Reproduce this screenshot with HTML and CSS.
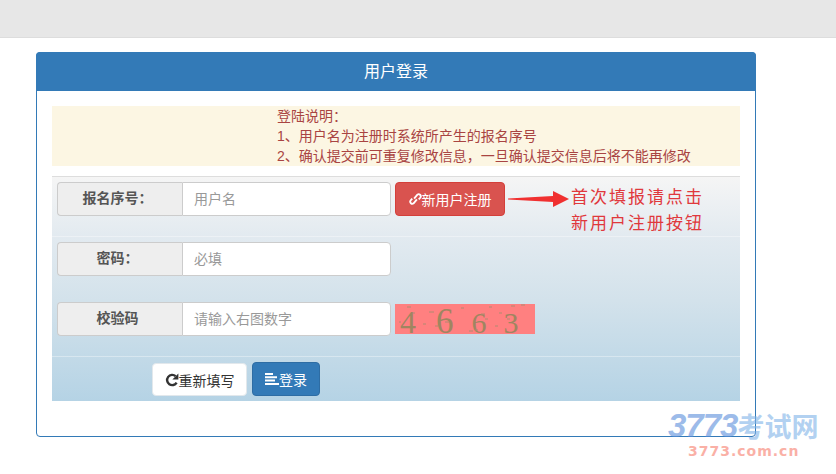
FILE: index.html
```html
<!DOCTYPE html>
<html lang="zh-CN">
<head>
    <meta charset="UTF-8">
    <meta name="viewport" content="width=device-width, initial-scale=1.0">
    <title>用户登录</title>
    <link rel="stylesheet" href="styles.css">
</head>
<body>
    <div class="navbar"></div>
    <div class="panel">
        <div class="panel-heading">用户登录</div>
        <div class="panel-body">
            <div class="notice">
                <div>登陆说明：</div>
                <div>1、用户名为注册时系统所产生的报名序号</div>
                <div>2、确认提交前可重复修改信息，一旦确认提交信息后将不能再修改</div>
            </div>
            <form class="login-form">
                <div class="form-row">
                    <div class="input-group">
                        <span class="addon">报名序号：</span>
                        <input type="text" class="form-input" placeholder="用户名">
                    </div>
                    <button type="button" class="btn btn-danger">
                        <svg class="icon" viewBox="0 0 14 14" width="13" height="14">
                            <path d="M5.5 6.5 9 2.3A2.3 2.3 0 0 1 12.3 5.4L10.5 7.5M8.5 7.5 5 11.7A2.3 2.3 0 0 1 1.7 8.6L3.5 6.5" fill="none" stroke="#fff" stroke-width="2"/>
                        </svg>新用户注册
                    </button>
                    <svg class="arrow" viewBox="0 0 62 18" width="62" height="18">
                        <polygon points="0,7.5 45,5 45,0 61,8 45,16 45,11 0,8.5" fill="#f03030"/>
                    </svg>
                    <div class="hint">首次填报请点击<br>新用户注册按钮</div>
                </div>
                <div class="form-row no-line">
                    <div class="input-group">
                        <span class="addon">密码：</span>
                        <input type="password" class="form-input" placeholder="必填">
                    </div>
                </div>
                <div class="form-row">
                    <div class="input-group">
                        <span class="addon">校验码</span>
                        <input type="text" class="form-input" placeholder="请输入右图数字">
                    </div>
                    <div class="captcha">
                        <span class="digit-a">4</span>
                        <span class="digit-b">6</span>
                        <span class="digit-c">6</span>
                        <span class="digit-d">3</span>
                        <svg class="specks" viewBox="0 0 140 30" width="140" height="30">
                            <path d="M12 3h4M4 18h2M34 8h5M40 22h3M50 18h4M66 4h3M74 27h4M86 10h4M90 15h3M94 3h3M100 22h3M104 9h3M112 15h3M116 2h4M126 1h4M80 26h3M28 20h3M18 9h2" fill="none" stroke="#b08a70" stroke-width="1"/>
                        </svg>
                    </div>
                </div>
                <div class="form-actions">
                    <button type="reset" class="btn btn-default">
                        <svg class="icon" viewBox="0 0 14 14" width="14" height="14">
                            <path d="M11.6 9.6A5.1 5.1 0 1 1 10.6 3.2" fill="none" stroke="#333" stroke-width="2.4"/>
                            <polygon points="13.4,0.6 13.4,6.6 7.4,6.6" fill="#333"/>
                        </svg>重新填写
                    </button>
                    <button type="button" class="btn btn-primary">
                        <svg class="icon" viewBox="0 0 14 12" width="14" height="12">
                            <path d="M0 0h8v2H0zM0 3.3h12v2H0zM0 6.6h10v2H0zM0 9.9h14v2H0z" fill="#fff"/>
                        </svg>登录
                    </button>
                </div>
            </form>
        </div>
    </div>
    <div class="watermark">
        <div class="wm-top"><i>3773</i><span>考试网</span></div>
        <div class="wm-bottom">3773.com.cn</div>
    </div>
</body>
</html>
```
FILE: styles.css
```css
* {
    box-sizing: border-box;
}
body {
    font-family: "Liberation Sans", "Noto Sans CJK SC", sans-serif;
    font-size: 14px;
    color: #333;
    background-color: #fff;
    margin: 0;
    height: 474px;
    overflow: hidden;
    position: relative;
}
.navbar {
    height: 38px;
    background-color: #e7e7e7;
    border-bottom: 1px solid #ddd;
}
.panel {
    width: 720px;
    height: 385px;
    margin: 14px 0 0 36px;
    border: 1px solid #337ab7;
    border-radius: 4px;
}
.panel-heading {
    height: 39px;
    margin: -1px -1px 0;
    background-color: #337ab7;
    border-radius: 4px 4px 0 0;
    color: #fff;
    font-size: 16px;
    line-height: 39px;
    text-align: center;
}
.panel-body {
    padding: 15px;
}
.notice {
    height: 60px;
    padding-left: 225px;
    background-color: #fcf6e3;
    color: #a94442;
    line-height: 20px;
}
.login-form {
    margin-top: 10px;
    height: 225px;
    background: linear-gradient(to bottom, #f5f5f5 0%, #e2eaf0 27%, #d3e2eb 55%, #b5d3e5 100%);
    border-top: 1px solid #ddd;
}
.form-row {
    display: flex;
    align-items: flex-start;
    gap: 5px;
    height: 60px;
    padding: 5px 0 0 5px;
    border-bottom: 1px solid rgba(255, 255, 255, 0.35);
}
.form-row.no-line {
    border-bottom: 0;
}
.input-group {
    display: flex;
    width: 334px;
    height: 34px;
    margin-right: -1px;
}
.addon {
    width: 125px;
    padding-right: 5px;
    background-color: #eee;
    border: 1px solid #ccc;
    border-right: 0;
    border-radius: 4px 0 0 4px;
    color: #555;
    font-weight: bold;
    line-height: 30px;
    text-align: center;
}
.form-input {
    flex: 1;
    min-width: 0;
    padding: 0 11px;
    background-color: #fff;
    border: 1px solid #ccc;
    border-radius: 0 4px 4px 0;
    outline: none;
    font-family: inherit;
    font-size: 14px;
    color: #555;
}
.form-input::placeholder {
    color: #999;
}
.btn {
    display: inline-flex;
    align-items: center;
    justify-content: center;
    height: 34px;
    padding: 0;
    border: 1px solid transparent;
    border-radius: 4px;
    font-family: inherit;
    font-size: 14px;
}
.btn-danger {
    width: 110px;
    background-color: #d9534f;
    border-color: #d43f3a;
    color: #fff;
}
.btn-default {
    width: 95px;
    height: 33px;
    margin-top: 1px;
    background-color: #fff;
    border-color: #e2e8ec;
    color: #333;
}
.btn-primary {
    width: 68px;
    background-color: #337ab7;
    border-color: #2e6da4;
    color: #fff;
}
.arrow {
    margin: 9px 0 0 -2px;
}
.hint {
    margin: 3px 0 0 -4px;
    color: #e0383c;
    font-size: 17px;
    letter-spacing: 2px;
    line-height: 26px;
    white-space: nowrap;
}
.captcha {
    position: relative;
    display: flex;
    align-items: flex-end;
    width: 140px;
    height: 30px;
    margin-top: 2px;
    background-color: #ff8080;
    color: #a08560;
    font-family: "Liberation Serif", serif;
}
.specks {
    position: absolute;
    left: 0;
    top: 0;
}
.digit-a {
    margin-left: 5px;
    font-size: 32px;
    line-height: 23px;
}
.digit-b {
    margin-left: 20px;
    font-size: 35px;
    line-height: 25px;
}
.digit-c {
    margin-left: 18px;
    font-size: 30px;
    line-height: 22px;
}
.digit-d {
    margin-left: 17px;
    font-size: 30px;
    line-height: 22px;
}
.form-actions {
    display: flex;
    align-items: flex-start;
    gap: 5px;
    padding: 5px 0 0 100px;
}
.watermark {
    position: absolute;
    left: 668px;
    top: 410px;
    width: 160px;
    opacity: 0.6;
}
.wm-top {
    color: #5b8fdc;
    font-size: 27px;
    font-weight: bold;
    line-height: 32px;
    white-space: nowrap;
}
.wm-top i {
    font-size: 33px;
    letter-spacing: -1px;
}
.wm-top span {
    color: #7fb4e8;
}
.wm-bottom {
    margin: 0 0 0 20px;
    color: #f77d6c;
    font-family: "DejaVu Sans", sans-serif;
    font-size: 14px;
    font-weight: bold;
    letter-spacing: 1px;
    line-height: 15px;
}
```
